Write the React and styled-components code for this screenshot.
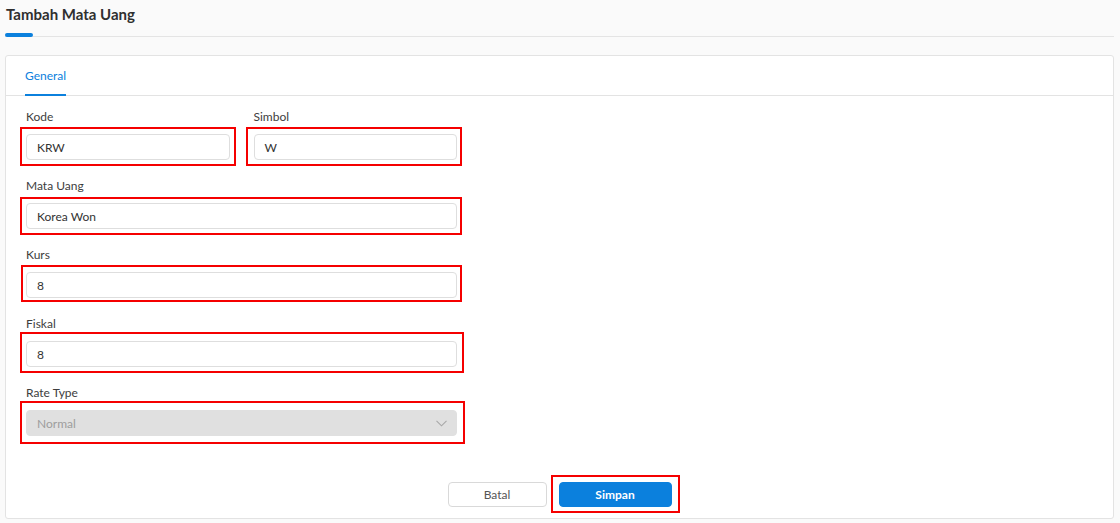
import React from 'react';
import styled, { createGlobalStyle } from 'styled-components';

const GlobalStyle = createGlobalStyle`
  * {
    box-sizing: border-box;
  }

  body {
    margin: 0;
    background: #fafafa;
    font-family: 'Lato', 'Noto Sans', sans-serif;
    color: #333;
  }
`;

const BLUE = '#0b80dd';

const Page = styled.div`
  display: flex;
  flex-direction: column;
  padding: 0 6px 4px 5px;
`;

const Title = styled.h1`
  margin: 0;
  padding: 4px 0 0 1px;
  font-size: 15px;
  line-height: 20px;
  font-weight: 700;
  color: #2f2f2f;
`;

const TitleTrack = styled.div`
  margin-top: 9px;
  border-bottom: 1px solid #e4e4e4;
`;

const TitleIndicator = styled.div`
  position: relative;
  width: 28px;
  height: 4px;
  margin-bottom: -1px;
  border-radius: 2px;
  background: ${BLUE};
`;

const Card = styled.section`
  margin-top: 18px;
  background: #fff;
  border: 1px solid #e3e3e3;
  border-radius: 3px;
`;

const TabBar = styled.div`
  display: flex;
  height: 40px;
  padding-left: 19px;
  border-bottom: 1px solid #e3e3e3;
`;

const Tab = styled.div`
  display: flex;
  align-items: center;
  margin-bottom: -1px;
  font-size: 12px;
  color: ${({ $active }) => ($active ? BLUE : '#666')};
  border-bottom: 2px solid ${({ $active }) => ($active ? BLUE : 'transparent')};
`;

const Form = styled.div`
  display: flex;
  flex-direction: column;
  gap: 18px;
  width: 451px;
  padding: 13px 0 0 20px;
`;

const Row = styled.div`
  display: grid;
  grid-template-columns: 1fr 1fr;
  column-gap: 24px;
`;

const Field = styled.div`
  display: flex;
  flex-direction: column;
  gap: 9px;
`;

const Label = styled.label`
  font-size: 12px;
  line-height: 16px;
  color: #3d3d3d;
`;

// red annotation frame; negative margin keeps it out of the flow
const Highlight = styled.div`
  display: ${({ $inline }) => ($inline ? 'inline-flex' : 'flex')};
  flex-direction: column;
  border: 2px solid #f50000;
  margin: ${({ $t, $r, $b, $l }) => `-${$t}px -${$r}px -${$b}px -${$l}px`};
  padding: ${({ $t, $r, $b, $l }) => `${$t - 2}px ${$r - 2}px ${$b - 2}px ${$l - 2}px`};
`;

const TextInput = styled.div`
  display: flex;
  align-items: center;
  height: 26px;
  padding: 0 10px;
  border: 1px solid #dedede;
  border-radius: 4px;
  background: #fff;
  font-size: 12px;
  color: #333;
`;

const Select = styled(TextInput)`
  justify-content: space-between;
  border-color: #e0e0e0;
  background: #e0e0e0;
  color: #9d9d9d;
  padding-right: 9px;
`;

const Footer = styled.div`
  display: flex;
  justify-content: center;
  gap: 12px;
  padding: 46px 0 11px;
`;

const Button = styled.button`
  height: 25px;
  width: ${({ $width }) => $width}px;
  border-radius: 4px;
  font-family: inherit;
  font-size: 12px;
  cursor: pointer;
  border: 1px solid ${({ $primary }) => ($primary ? BLUE : '#d9d9d9')};
  background: ${({ $primary }) => ($primary ? BLUE : '#fff')};
  color: ${({ $primary }) => ($primary ? '#fff' : '#555')};
  font-weight: ${({ $primary }) => ($primary ? 700 : 400)};
`;

function Chevron() {
  return (
    <svg width="11" height="7" viewBox="0 0 11 7" fill="none">
      <path d="M0.5 0.8 L5.5 5.8 L10.5 0.8" stroke="#a8a8a8" strokeWidth="1.1" />
    </svg>
  );
}

export default function App() {
  return (
    <Page>
      <GlobalStyle />
      <Title>Tambah Mata Uang</Title>
      <TitleTrack>
        <TitleIndicator />
      </TitleTrack>

      <Card>
        <TabBar>
          <Tab $active>General</Tab>
        </TabBar>

        <Form>
          <Row>
            <Field>
              <Label>Kode</Label>
              <Highlight $t={7} $r={6} $b={6} $l={6}>
                <TextInput>KRW</TextInput>
              </Highlight>
            </Field>
            <Field>
              <Label>Simbol</Label>
              <Highlight $t={7} $r={5} $b={6} $l={8}>
                <TextInput>W</TextInput>
              </Highlight>
            </Field>
          </Row>

          <Field>
            <Label>Mata Uang</Label>
            <Highlight $t={6} $r={5} $b={6} $l={6}>
              <TextInput>Korea Won</TextInput>
            </Highlight>
          </Field>

          <Field>
            <Label>Kurs</Label>
            <Highlight $t={7} $r={5} $b={4} $l={5}>
              <TextInput>8</TextInput>
            </Highlight>
          </Field>

          <Field>
            <Label>Fiskal</Label>
            <Highlight $t={9} $r={7} $b={6} $l={6}>
              <TextInput>8</TextInput>
            </Highlight>
          </Field>

          <Field>
            <Label>Rate Type</Label>
            <Highlight $t={9} $r={8} $b={8} $l={6}>
              <Select>
                Normal
                <Chevron />
              </Select>
            </Highlight>
          </Field>
        </Form>

        <Footer>
          <Button $width={99}>Batal</Button>
          <Highlight $inline $t={7} $r={8} $b={6} $l={8}>
            <Button $primary $width={113}>
              Simpan
            </Button>
          </Highlight>
        </Footer>
      </Card>
    </Page>
  );
}
